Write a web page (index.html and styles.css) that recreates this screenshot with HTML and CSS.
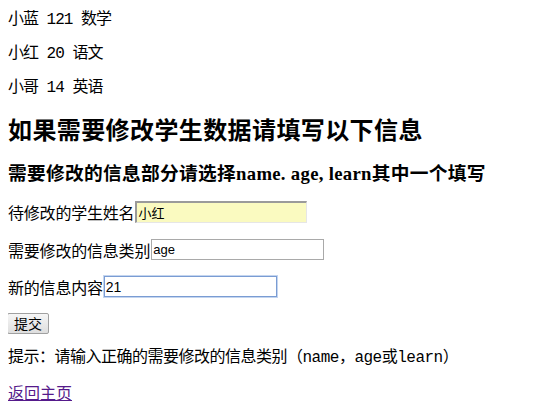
FILE: index.html
```html
<!DOCTYPE html>
<html>
<head>
<meta charset="utf-8">
<link rel="stylesheet" href="styles.css">
</head>
<body>
<div class="list">
  <div class="row">小蓝 121 数学</div>
  <div class="row">小红 20 语文</div>
  <div class="row">小哥 14 英语</div>
</div>
<h2 class="title">如果需要修改学生数据请填写以下信息</h2>
<h3 class="subtitle">需要修改的信息部分请选择name. age, learn其中一个填写</h3>
<form class="form">
  <div class="field field-tall"><span class="label">待修改的学生姓名</span><input class="input input-auto" type="text" value="小红"></div>
  <div class="field"><span class="label">需要修改的信息类别</span><input class="input" type="text" value="age"></div>
  <div class="field"><span class="label">新的信息内容</span><input class="input input-focus" type="text" value="21"></div>
  <div class="field"><button class="btn" type="button">提交</button></div>
</form>
<div class="hint">提示：请输入正确的需要修改的信息类别（name，age或learn）</div>
<div class="back"><a class="link" href="#">返回主页</a></div>
</body>
</html>
```
FILE: styles.css
```css
html, body { background: #fff; }
body {
  margin: 8px;
  font-family: "Liberation Mono", "Noto Sans CJK SC", monospace;
  font-size: 16px;
  color: #000;
}
.list { margin-top: 3px; display: flex; flex-direction: column; gap: 16px; }
.row { line-height: 18px; height: 18px; letter-spacing: -1px; }
.title {
  font-family: "Liberation Serif", "Noto Sans CJK SC", serif;
  font-size: 24px;
  font-weight: bold;
  line-height: 28px;
  letter-spacing: 0.4px;
  margin: 20px 0 0;
}
.subtitle {
  font-family: "Liberation Serif", "Noto Sans CJK SC", serif;
  font-size: 18.72px;
  font-weight: bold;
  line-height: 22px;
  letter-spacing: 0.3px;
  margin: 18px 0 0;
}
.form { margin-top: 16px; display: flex; flex-direction: column; gap: 16px; }
.field { display: flex; align-items: center; height: 21px; }
.field-tall { height: 22px; }
.label {
  font-family: "Noto Sans CJK SC", sans-serif;
  font-size: 16px;
  line-height: 20px;
  letter-spacing: -0.2px;
}
.input {
  box-sizing: border-box;
  width: 173px;
  height: 21px;
  margin: 0 0 0 1px;
  padding: 0 1px;
  border: 1px solid #a9a9a9;
  font-family: "Liberation Sans", "Noto Sans CJK SC", sans-serif;
  font-size: 13px;
  color: #000;
  background: #fff;
  outline: none;
}
.input-auto {
  background: #fafac0;
  border-style: solid;
  border-width: 2px 1px 1px 2px;
  border-color: #9a9a9a #e6e6e6 #e6e6e6 #9a9a9a;
  width: 172px;
  height: 22px;
  font-family: "Noto Sans CJK SC", sans-serif;
}
.input-focus {
  border: 1px solid #7a9cd3;
  box-shadow: 0 0 0 1px #c4d5ef;
  font-size: 14px;
}
.btn {
  box-sizing: border-box;
  margin: 0 0 0 -1px;
  width: 42px;
  height: 21px;
  padding: 0;
  border: 1px solid #a0a0a0;
  border-radius: 2px;
  background: linear-gradient(#f6f6f6, #dedede);
  font-family: "Noto Sans CJK SC", sans-serif;
  font-size: 14px;
  line-height: 19px;
  color: #000;
}
.hint { margin-top: 15px; line-height: 18px; letter-spacing: -0.5px; }
.back { margin-top: 16px; line-height: 18px; }
.link {
  color: #551a8b;
  font-family: "Noto Sans CJK SC", sans-serif;
}
```
